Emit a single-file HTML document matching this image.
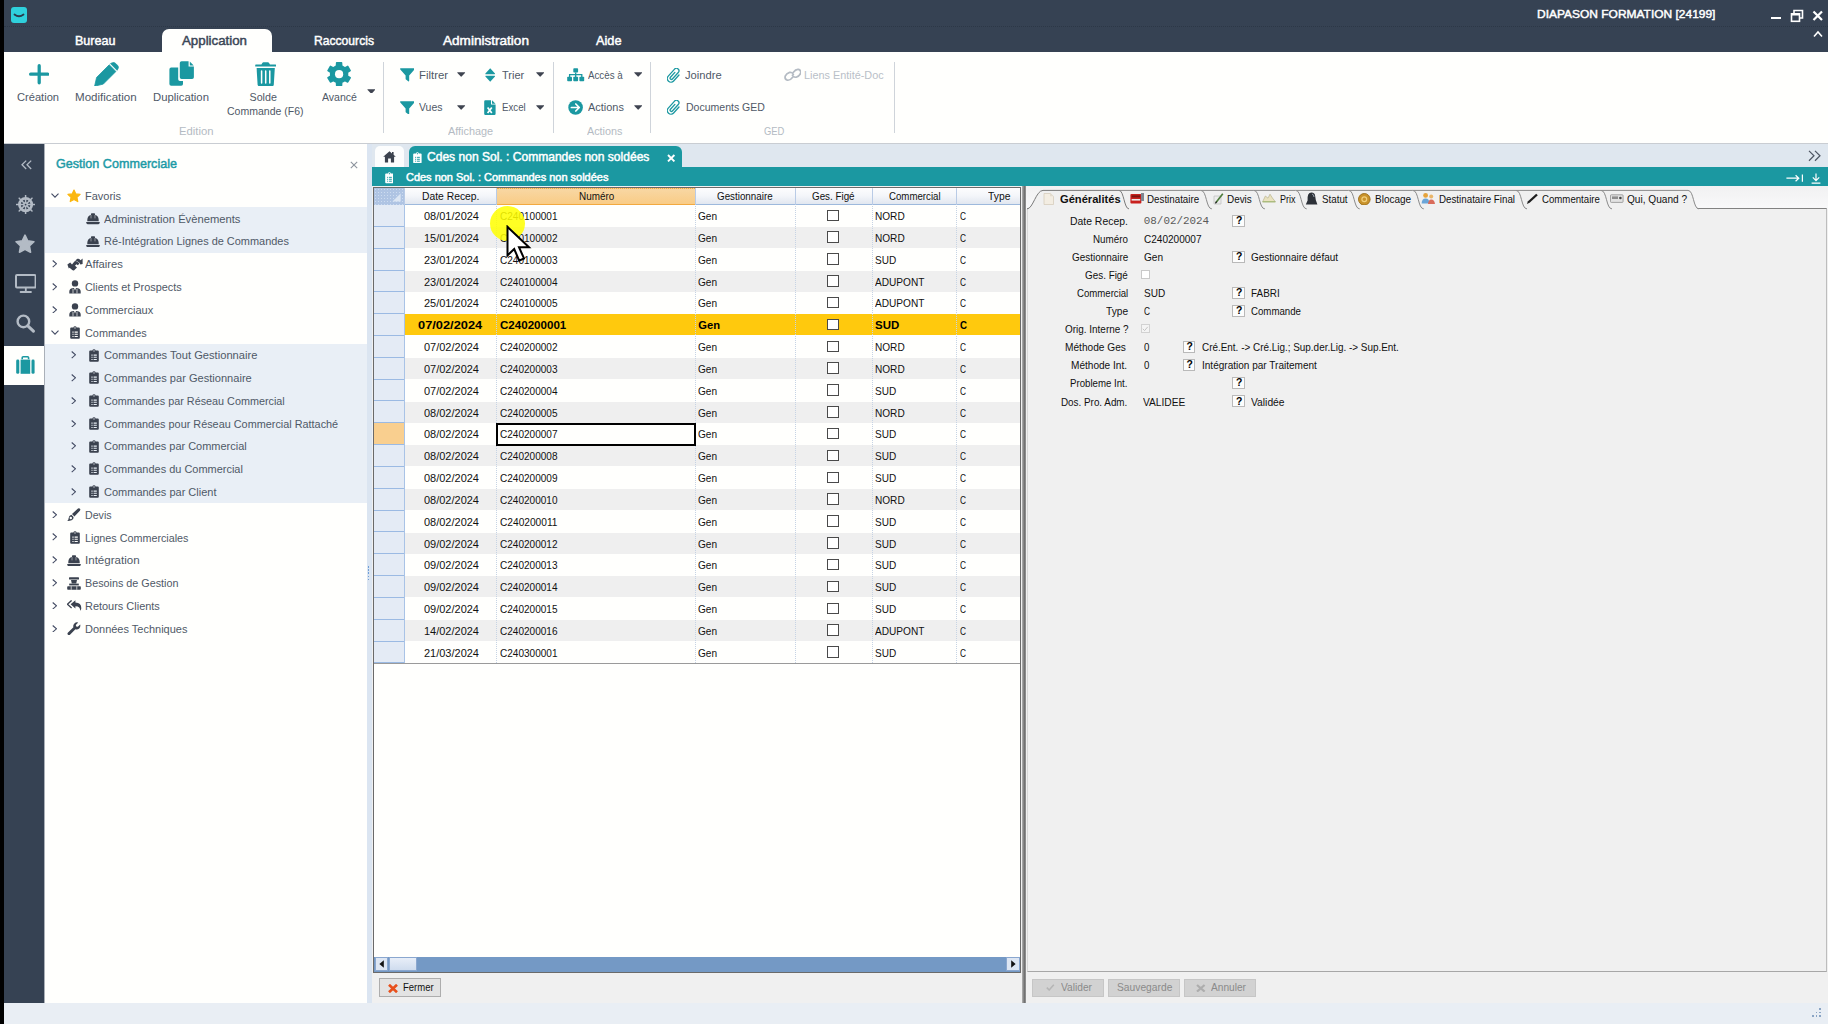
<!DOCTYPE html>
<html lang="fr"><head><meta charset="utf-8"><title>DIAPASON FORMATION [24199]</title>
<style>
html,body{margin:0;padding:0;}
body{width:1828px;height:1024px;overflow:hidden;position:relative;background:#fffffd;font-family:"Liberation Sans",sans-serif;}
.r{position:absolute;display:block;}
.t{position:absolute;white-space:nowrap;line-height:1;transform-origin:0 50%;}
</style></head><body>
<div class="r" style="left:0px;top:0px;width:4px;height:1024px;background:#000;"></div>
<div class="r" style="left:4px;top:0px;width:1824px;height:52px;background:#364253;"></div>
<div class="r" style="left:4px;top:26px;width:1824px;height:1px;background:transparent;border-top:1px dotted #2c3746;"></div>
<svg class="r" style="left:11px;top:7px;" width="17" height="17" viewBox="0 0 17 17"><rect x="0" y="0" width="16" height="16" rx="3" fill="#2fd0dc"/><path d="M3.5 7.5 Q8 11 12.5 7.5" stroke="#2b3a4c" stroke-width="1.8" fill="none" stroke-linecap="round"/></svg>
<span class="t" style="left:1536.50px;top:8.48px;font-size:11.6px;color:#fff;-webkit-text-stroke:0.45px #fff;transform:scaleX(1.0322);">DIAPASON FORMATION [24199]</span>
<div class="r" style="left:1771px;top:16.6px;width:10px;height:2.2px;background:#fff;"></div>
<svg class="r" style="left:1790px;top:9px;" width="14" height="14" viewBox="0 0 14 14"><path d="M4 4V1.5H12.5V9H10" fill="none" stroke="#fff" stroke-width="1.6"/><rect x="1.5" y="4.8" width="8" height="7.5" fill="none" stroke="#fff" stroke-width="1.6"/><rect x="1.5" y="4.5" width="8" height="2" fill="#fff"/></svg>
<svg class="r" style="left:1812px;top:10px;" width="12" height="12" viewBox="0 0 12 12"><path d="M1.5 1.5L10 10M10 1.5L1.5 10" stroke="#fff" stroke-width="2.2" fill="none"/></svg>
<svg class="r" style="left:1813px;top:30px;" width="10" height="8" viewBox="0 0 10 8"><path d="M1 6.5L5 2L9 6.5" stroke="#fff" stroke-width="1.6" fill="none"/></svg>
<div class="r" style="left:161.5px;top:29px;width:110px;height:23px;background:#fffffd;border-radius:7px 7px 0 0;"></div>
<span class="t" style="left:75.00px;top:35.10px;font-size:12.4px;color:#fff;-webkit-text-stroke:0.45px #fff;transform:scaleX(1.0131);">Bureau</span>
<span class="t" style="left:182.00px;top:35.10px;font-size:12.4px;color:#3a4656;-webkit-text-stroke:0.45px #3a4656;transform:scaleX(1.0718);">Application</span>
<span class="t" style="left:314.00px;top:35.10px;font-size:12.4px;color:#fff;-webkit-text-stroke:0.45px #fff;transform:scaleX(0.9785);">Raccourcis</span>
<span class="t" style="left:442.50px;top:35.10px;font-size:12.4px;color:#fff;-webkit-text-stroke:0.45px #fff;transform:scaleX(1.0948);">Administration</span>
<span class="t" style="left:596.00px;top:35.10px;font-size:12.4px;color:#fff;-webkit-text-stroke:0.45px #fff;transform:scaleX(1.0277);">Aide</span>
<div class="r" style="left:4px;top:52px;width:1824px;height:91px;background:#fffffd;"></div>
<div class="r" style="left:4px;top:143px;width:1824px;height:1px;background:#c9cdd2;"></div>
<div class="r" style="left:4px;top:144px;width:1824px;height:859px;background:#dfe7f1;"></div>
<div class="r" style="left:4px;top:1003px;width:1824px;height:21px;background:#e9eef4;"></div>
<div class="r" style="left:4px;top:144px;width:40px;height:859px;background:#364253;"></div>
<div class="r" style="left:44px;top:144px;width:322.5px;height:859px;background:#fffffd;"></div>
<div class="r" style="left:366.5px;top:144px;width:6.5px;height:859px;background:#dbe5f1;"></div>
<div class="r" style="left:44px;top:144px;width:0.9px;height:859px;background:#aab0b8;"></div>
<svg class="r" style="left:28.5px;top:64.3px;" width="20.4" height="20.4" viewBox="0 0 20 20"><path d="M10 1.6V18.4M1.6 10H18.4" stroke="#1b98a1" stroke-width="3.2" stroke-linecap="round" fill="none"/></svg>
<span class="t" style="left:17.10px;top:92.14px;font-size:10.7px;color:#4f5967;transform:scaleX(1.0411);">Création</span>
<svg class="r" style="left:94.2px;top:61.6px;" width="25" height="24.6" viewBox="0 0 25 24.6"><path d="M0.6 24.2L2.6 15.4L15.2 2.8L21.9 9.5L9.3 22.1Z" fill="#1b98a1" stroke="#1b98a1" stroke-width="0.8" stroke-linejoin="round"/><path d="M16.5 1.6L18 0.9Q20 -0.1 21.6 1.4L23.5 3.3Q25 5 24 6.8L23.1 8.3Z" fill="#1b98a1" stroke="#1b98a1" stroke-width="0.8" stroke-linejoin="round"/></svg>
<span class="t" style="left:75.10px;top:92.14px;font-size:10.7px;color:#4f5967;transform:scaleX(1.0824);">Modification</span>
<svg class="r" style="left:169.2px;top:61.3px;" width="25.2" height="25" viewBox="0 0 25.2 25"><path d="M2.2 6.6H9.2V18.2Q9.2 20 11 20H14V23Q14 24.8 12.2 24.8H2.2Q0.4 24.8 0.4 23V8.4Q0.4 6.6 2.2 6.6Z" fill="#1b98a1"/><path d="M12.6 0.3H19.6V5.5H24.9V16.2Q24.9 18 23.1 18H12.6Q10.8 18 10.8 16.2V2.1Q10.8 0.3 12.6 0.3Z" fill="#1b98a1"/><path d="M20.8 0.5L24.7 4.4H20.8Z" fill="#1b98a1"/></svg>
<span class="t" style="left:153.10px;top:92.14px;font-size:10.7px;color:#4f5967;transform:scaleX(1.0579);">Duplication</span>
<svg class="r" style="left:255px;top:61.6px;" width="21.4" height="24.6" viewBox="0 0 21.4 24.6"><path d="M0.8 2.6Q0.2 2.6 0.2 3.4V4.6H21.2V3.4Q21.2 2.6 20.6 2.6H15L13.9 0.8Q13.6 0.3 13 0.3H8.4Q7.8 0.3 7.5 0.8L6.4 2.6Z" fill="#1b98a1"/><path d="M1.6 5.9H19.8L18.8 22.4Q18.6 24.4 16.6 24.4H4.8Q2.8 24.4 2.6 22.4Z" fill="#1b98a1"/><path d="M6.6 9V21M10.7 9V21M14.8 9V21" stroke="#fff" stroke-width="1.5" stroke-linecap="round"/></svg>
<span class="t" style="left:249.50px;top:92.14px;font-size:10.7px;color:#4f5967;">Solde</span>
<span class="t" style="left:226.60px;top:106.14px;font-size:10.7px;color:#4f5967;transform:scaleX(0.9835);">Commande (F6)</span>
<svg class="r" style="left:327.2px;top:61.8px;" width="24.2" height="24.4" viewBox="0 0 24.2 24.4"><path d="M9.53 3.99L9.69 0.85L14.51 0.85L14.67 3.99L17.92 5.87L20.72 4.44L23.13 8.62L20.49 10.32L20.49 14.08L23.13 15.78L20.72 19.96L17.92 18.53L14.67 20.41L14.51 23.55L9.69 23.55L9.53 20.41L6.28 18.53L3.48 19.96L1.07 15.78L3.71 14.08L3.71 10.32L1.07 8.62L3.48 4.44L6.28 5.87Z" fill="#1b98a1" stroke="#1b98a1" stroke-width="1.6" stroke-linejoin="round"/><circle cx="12.1" cy="12.2" r="4.1" fill="#fffffd"/></svg>
<span class="t" style="left:321.80px;top:92.14px;font-size:10.7px;color:#4f5967;transform:scaleX(0.9860);">Avancé</span>
<svg class="r" style="left:366.6px;top:88.5px;" width="8.8" height="4.8" viewBox="0 0 10 6"><path d="M0.3 0.4H9.7Q10.2 0.6 9.7 1.2L5.5 5.6Q5 6 4.5 5.6L0.3 1.2Q-0.2 0.6 0.3 0.4Z" fill="#3f4450"/></svg>
<span class="t" style="left:178.50px;top:126.04px;font-size:10.7px;color:#b4bbc3;transform:scaleX(1.0546);">Edition</span>
<div class="r" style="left:383.4px;top:61.5px;width:1px;height:71px;background:#cfd4da;"></div>
<div class="r" style="left:552.5px;top:61.5px;width:1px;height:71px;background:#cfd4da;"></div>
<div class="r" style="left:650.3px;top:61.5px;width:1px;height:71px;background:#cfd4da;"></div>
<div class="r" style="left:893.6px;top:61.5px;width:1px;height:71px;background:#cfd4da;"></div>
<svg class="r" style="left:399.6px;top:68px;" width="14.8" height="13.7" viewBox="0 0 14.8 13.7"><path d="M0.6 0.3H14.2Q15.1 0.5 14.5 1.5L9.2 7.4V12.6Q9.2 13.8 8.2 13.2L6 11.6Q5.6 11.3 5.6 10.8V7.4L0.3 1.5Q-0.3 0.5 0.6 0.3Z" fill="#1b98a1"/></svg>
<svg class="r" style="left:399.6px;top:100.6px;" width="14.8" height="13.7" viewBox="0 0 14.8 13.7"><path d="M0.6 0.3H14.2Q15.1 0.5 14.5 1.5L9.2 7.4V12.6Q9.2 13.8 8.2 13.2L6 11.6Q5.6 11.3 5.6 10.8V7.4L0.3 1.5Q-0.3 0.5 0.6 0.3Z" fill="#1b98a1"/></svg>
<span class="t" style="left:418.80px;top:70.04px;font-size:10.7px;color:#4f5967;transform:scaleX(1.0644);">Filtrer</span>
<span class="t" style="left:418.80px;top:102.04px;font-size:10.7px;color:#4f5967;transform:scaleX(0.9838);">Vues</span>
<svg class="r" style="left:457.2px;top:72.4px;" width="8.4" height="4.8" viewBox="0 0 10 6"><path d="M0.3 0.4H9.7Q10.2 0.6 9.7 1.2L5.5 5.6Q5 6 4.5 5.6L0.3 1.2Q-0.2 0.6 0.3 0.4Z" fill="#3f4450"/></svg>
<svg class="r" style="left:457.2px;top:105px;" width="8.4" height="4.8" viewBox="0 0 10 6"><path d="M0.3 0.4H9.7Q10.2 0.6 9.7 1.2L5.5 5.6Q5 6 4.5 5.6L0.3 1.2Q-0.2 0.6 0.3 0.4Z" fill="#3f4450"/></svg>
<svg class="r" style="left:484.5px;top:68px;" width="10.4" height="14" viewBox="0 0 10.4 14"><path d="M5.2 0.3L10 5.6Q10.3 6.2 9.6 6.2H0.8Q0.1 6.2 0.4 5.6Z M5.2 13.7L10 8.4Q10.3 7.8 9.6 7.8H0.8Q0.1 7.8 0.4 8.4Z" fill="#1b98a1"/></svg>
<span class="t" style="left:501.50px;top:70.04px;font-size:10.7px;color:#4f5967;transform:scaleX(1.0283);">Trier</span>
<svg class="r" style="left:535.9px;top:72.4px;" width="8.4" height="4.8" viewBox="0 0 10 6"><path d="M0.3 0.4H9.7Q10.2 0.6 9.7 1.2L5.5 5.6Q5 6 4.5 5.6L0.3 1.2Q-0.2 0.6 0.3 0.4Z" fill="#3f4450"/></svg>
<svg class="r" style="left:535.9px;top:105px;" width="8.4" height="4.8" viewBox="0 0 10 6"><path d="M0.3 0.4H9.7Q10.2 0.6 9.7 1.2L5.5 5.6Q5 6 4.5 5.6L0.3 1.2Q-0.2 0.6 0.3 0.4Z" fill="#3f4450"/></svg>
<svg class="r" style="left:483.8px;top:99.8px;" width="11.8" height="15.2" viewBox="0 0 11.8 15.2"><path d="M1.4 0.2H7V4.6H11.6V13.8Q11.6 15 10.4 15H1.4Q0.2 15 0.2 13.8V1.4Q0.2 0.2 1.4 0.2Z" fill="#1b98a1"/><path d="M8 0.3L11.5 3.8H8Z" fill="#1b98a1"/><path d="M3.6 7.6L7.8 13M7.8 7.6L3.6 13" stroke="#fff" stroke-width="1.7"/></svg>
<span class="t" style="left:501.50px;top:102.04px;font-size:10.7px;color:#4f5967;transform:scaleX(0.9057);">Excel</span>
<span class="t" style="left:447.60px;top:126.04px;font-size:10.7px;color:#b4bbc3;transform:scaleX(1.0154);">Affichage</span>
<svg class="r" style="left:567.3px;top:68.3px;" width="17.4" height="13.4" viewBox="0 0 17.4 13.4"><rect x="6.3" y="0.2" width="4.8" height="4.4" rx="0.8" fill="#1b98a1"/><rect x="0.2" y="8.8" width="4.8" height="4.4" rx="0.8" fill="#1b98a1"/><rect x="6.3" y="8.8" width="4.8" height="4.4" rx="0.8" fill="#1b98a1"/><rect x="12.4" y="8.8" width="4.8" height="4.4" rx="0.8" fill="#1b98a1"/><path d="M8.7 4.4V9M2.6 9V6.7H14.8V9" stroke="#1b98a1" stroke-width="1.3" fill="none"/></svg>
<span class="t" style="left:587.90px;top:70.04px;font-size:10.7px;color:#4f5967;transform:scaleX(0.9117);">Accès à</span>
<svg class="r" style="left:633.7px;top:72.4px;" width="8.4" height="4.8" viewBox="0 0 10 6"><path d="M0.3 0.4H9.7Q10.2 0.6 9.7 1.2L5.5 5.6Q5 6 4.5 5.6L0.3 1.2Q-0.2 0.6 0.3 0.4Z" fill="#3f4450"/></svg>
<svg class="r" style="left:633.7px;top:105px;" width="8.4" height="4.8" viewBox="0 0 10 6"><path d="M0.3 0.4H9.7Q10.2 0.6 9.7 1.2L5.5 5.6Q5 6 4.5 5.6L0.3 1.2Q-0.2 0.6 0.3 0.4Z" fill="#3f4450"/></svg>
<svg class="r" style="left:568.4px;top:100.1px;" width="15.2" height="15" viewBox="0 0 15.2 15"><circle cx="7.6" cy="7.5" r="7.3" fill="#1b98a1"/><path d="M3.4 7.5H11M7.8 4L11.3 7.5L7.8 11" stroke="#fff" stroke-width="1.7" fill="none" stroke-linecap="round" stroke-linejoin="round"/></svg>
<span class="t" style="left:587.90px;top:102.04px;font-size:10.7px;color:#4f5967;transform:scaleX(1.0231);">Actions</span>
<span class="t" style="left:586.50px;top:126.04px;font-size:10.7px;color:#b4bbc3;transform:scaleX(1.0088);">Actions</span>
<svg class="r" style="left:667px;top:67.6px;" width="13.4" height="15" viewBox="0 0 13.4 15"><g transform="rotate(42 6.7 7.5)"><path d="M10.3 3.6V11.6A3.6 3.6 0 0 1 3.1 11.6V2.2A2.5 2.5 0 0 1 8.1 2.2V11A1.3 1.3 0 0 1 5.5 11V4.4" fill="none" stroke="#1b98a1" stroke-width="1.3" stroke-linecap="round"/></g></svg>
<svg class="r" style="left:667px;top:100px;" width="13.4" height="15" viewBox="0 0 13.4 15"><g transform="rotate(42 6.7 7.5)"><path d="M10.3 3.6V11.6A3.6 3.6 0 0 1 3.1 11.6V2.2A2.5 2.5 0 0 1 8.1 2.2V11A1.3 1.3 0 0 1 5.5 11V4.4" fill="none" stroke="#1b98a1" stroke-width="1.3" stroke-linecap="round"/></g></svg>
<span class="t" style="left:685.20px;top:70.04px;font-size:10.7px;color:#4f5967;transform:scaleX(1.0459);">Joindre</span>
<span class="t" style="left:685.90px;top:102.04px;font-size:10.7px;color:#4f5967;transform:scaleX(0.9842);">Documents GED</span>
<svg class="r" style="left:783.7px;top:68px;" width="17.8" height="13.6" viewBox="0 0 17.8 13.6"><g fill="none" stroke="#b4bbc3" stroke-width="1.7" stroke-linecap="round"><path d="M8.4 9.4Q6 12.6 3.4 12.2Q0.4 11.4 1.2 8.2Q2.4 5.4 5.6 4.4Q8.6 4 9.4 6.4"/><path d="M9.4 4.2Q11.8 1 14.4 1.4Q17.4 2.2 16.6 5.4Q15.4 8.2 12.2 9.2Q9.2 9.6 8.4 7.2"/></g></svg>
<span class="t" style="left:804.40px;top:70.04px;font-size:10.7px;color:#b9c0c8;transform:scaleX(1.0153);">Liens Entité-Doc</span>
<span class="t" style="left:763.70px;top:126.04px;font-size:10.7px;color:#b4bbc3;transform:scaleX(0.8799);">GED</span>
<svg class="r" style="left:20.5px;top:160px;" width="11" height="9.6" viewBox="0 0 11 9.6"><path d="M5.2 0.6L1 4.8L5.2 9M10.2 0.6L6 4.8L10.2 9" fill="none" stroke="#b3bbc5" stroke-width="1.3"/></svg>
<svg class="r" style="left:15.9px;top:194.7px;" width="19.2" height="19.2" viewBox="0 0 19.2 19.2"><circle cx="9.6" cy="9.6" r="6.2" fill="none" stroke="#b3bbc5" stroke-width="2.7"/><path d="M11.10 9.60L18.70 9.60" stroke="#b3bbc5" stroke-width="1.5" stroke-linecap="round"/><path d="M10.66 10.66L16.03 16.03" stroke="#b3bbc5" stroke-width="1.5" stroke-linecap="round"/><path d="M9.60 11.10L9.60 18.70" stroke="#b3bbc5" stroke-width="1.5" stroke-linecap="round"/><path d="M8.54 10.66L3.17 16.03" stroke="#b3bbc5" stroke-width="1.5" stroke-linecap="round"/><path d="M8.10 9.60L0.50 9.60" stroke="#b3bbc5" stroke-width="1.5" stroke-linecap="round"/><path d="M8.54 8.54L3.17 3.17" stroke="#b3bbc5" stroke-width="1.5" stroke-linecap="round"/><path d="M9.60 8.10L9.60 0.50" stroke="#b3bbc5" stroke-width="1.5" stroke-linecap="round"/><path d="M10.66 8.54L16.03 3.17" stroke="#b3bbc5" stroke-width="1.5" stroke-linecap="round"/><circle cx="9.6" cy="9.6" r="2.5" fill="#b3bbc5"/><circle cx="9.6" cy="9.6" r="0.9" fill="#364253"/></svg>
<svg class="r" style="left:15px;top:233.6px;" width="20" height="20" viewBox="0 0 20 20"><path d="M10.00 1.20L12.70 6.88L18.94 7.70L14.37 12.02L15.53 18.20L10.00 15.20L4.47 18.20L5.63 12.02L1.06 7.70L7.30 6.88Z" fill="#b3bbc5" stroke="#b3bbc5" stroke-width="1.6" stroke-linejoin="round"/></svg>
<svg class="r" style="left:14.6px;top:274.3px;" width="21.6" height="19" viewBox="0 0 21.6 19"><rect x="1" y="1" width="19.6" height="12.6" rx="1" fill="none" stroke="#b3bbc5" stroke-width="2"/><path d="M10.8 14V17.6M5.6 18H16" stroke="#b3bbc5" stroke-width="1.8" fill="none" stroke-linecap="round"/></svg>
<svg class="r" style="left:15.8px;top:314.4px;" width="19" height="18.6" viewBox="0 0 19 18.6"><circle cx="7.4" cy="7.4" r="5.8" fill="none" stroke="#b3bbc5" stroke-width="2.4"/><path d="M11.8 11.8L17.4 17.2" stroke="#b3bbc5" stroke-width="3" stroke-linecap="round"/></svg>
<div class="r" style="left:4px;top:345.5px;width:40px;height:39.7px;background:#fffffd;"></div>
<svg class="r" style="left:15.9px;top:356px;" width="18.8" height="18" viewBox="0 0 18.8 18"><path d="M6.2 3.2V1.8Q6.2 0.8 7.2 0.8H11.6Q12.6 0.8 12.6 1.8V3.2" fill="none" stroke="#1b98a1" stroke-width="1.6"/><rect x="0.2" y="3.6" width="3.1" height="14.2" rx="1.4" fill="#1b98a1"/><rect x="4.6" y="3.6" width="9.6" height="14.2" fill="#1b98a1"/><rect x="15.5" y="3.6" width="3.1" height="14.2" rx="1.4" fill="#1b98a1"/></svg>
<span class="t" style="left:56.20px;top:157.96px;font-size:12.8px;color:#1c9aa6;-webkit-text-stroke:0.45px #1c9aa6;transform:scaleX(0.9835);">Gestion Commerciale</span>
<svg class="r" style="left:350px;top:161px;" width="8" height="8" viewBox="0 0 8 8"><path d="M0.8 0.8L7.2 7.2M7.2 0.8L0.8 7.2" stroke="#8d949d" stroke-width="1.1"/></svg>
<div class="r" style="left:44.5px;top:207.325px;width:322px;height:45.55px;background:#e9eff6;"></div>
<div class="r" style="left:44.5px;top:343.975px;width:322px;height:159.425px;background:#e9eff6;"></div>
<svg class="r" style="left:50.6px;top:193.038px;" width="8" height="5" viewBox="0 0 8 5"><path d="M0.5 0.6L4 4.2L7.5 0.6" fill="none" stroke="#434b63" stroke-width="1.1"/></svg>
<svg class="r" style="left:67.3px;top:188.638px;" width="14" height="14" viewBox="0 0 14 14"><path d="M7.00 1.00L8.82 4.89L13.09 5.42L9.95 8.36L10.76 12.58L7.00 10.50L3.24 12.58L4.05 8.36L0.91 5.42L5.18 4.89Z" fill="#fbb70e" stroke="#fbb70e" stroke-width="1.2" stroke-linejoin="round"/></svg>
<span class="t" style="left:85.20px;top:190.88px;font-size:10.7px;color:#4f5967;transform:scaleX(1.0291);">Favoris</span>
<svg class="r" style="left:86.4px;top:213.213px;" width="14" height="11.4" viewBox="0 0 14 11.4"><path d="M1.3 8.2V6.8Q1.5 2.8 5 1.7V0.9Q5 0.2 5.7 0.2H8.3Q9 0.2 9 0.9V1.7Q12.5 2.8 12.7 6.8V8.2Z" fill="#3b424f"/><path d="M5 2V5.4M9 2V5.4" stroke="#fffffd" stroke-width="0.6" opacity="0.75"/><path d="M0.7 8.9H13.3Q13.9 8.9 13.8 9.6Q13.5 11.2 12.4 11.2H1.6Q0.5 11.2 0.2 9.6Q0.1 8.9 0.7 8.9Z" fill="#3b424f"/></svg>
<span class="t" style="left:104.40px;top:213.65px;font-size:10.7px;color:#4f5967;transform:scaleX(1.0488);">Administration Évènements</span>
<svg class="r" style="left:86.4px;top:235.988px;" width="14" height="11.4" viewBox="0 0 14 11.4"><path d="M1.3 8.2V6.8Q1.5 2.8 5 1.7V0.9Q5 0.2 5.7 0.2H8.3Q9 0.2 9 0.9V1.7Q12.5 2.8 12.7 6.8V8.2Z" fill="#3b424f"/><path d="M5 2V5.4M9 2V5.4" stroke="#fffffd" stroke-width="0.6" opacity="0.75"/><path d="M0.7 8.9H13.3Q13.9 8.9 13.8 9.6Q13.5 11.2 12.4 11.2H1.6Q0.5 11.2 0.2 9.6Q0.1 8.9 0.7 8.9Z" fill="#3b424f"/></svg>
<span class="t" style="left:104.40px;top:236.43px;font-size:10.7px;color:#4f5967;transform:scaleX(1.0238);">Ré-Intégration Lignes de Commandes</span>
<svg class="r" style="left:51.7px;top:260.162px;" width="5.4" height="7.6" viewBox="0 0 5.4 7.6"><path d="M0.7 0.5L4.5 3.8L0.7 7.1" fill="none" stroke="#434b63" stroke-width="1.1"/></svg>
<svg class="r" style="left:67.2px;top:257.562px;" width="16" height="13" viewBox="0 0 16 13"><path d="M0.4 6.6L3.2 4.6L5 6.4L7.4 3.4Q8.4 2.6 9.6 3.2L12.4 5.2L11 7.2L9.4 6.2L8 7.8L10 9.4L7.2 12.2Q6.2 12.8 5.2 12L2.6 9.8L1.8 10.4Z" fill="#3b424f"/><path d="M8.2 2.4L10.4 0.8Q11.4 0.4 12.2 1L13.6 2.2L15.6 0.6V6L13.4 6.4L12.6 5L9.8 3Q9 2.4 8.2 2.4Z" fill="#3b424f"/></svg>
<span class="t" style="left:85.20px;top:259.20px;font-size:10.7px;color:#4f5967;transform:scaleX(1.0532);">Affaires</span>
<svg class="r" style="left:51.7px;top:282.938px;" width="5.4" height="7.6" viewBox="0 0 5.4 7.6"><path d="M0.7 0.5L4.5 3.8L0.7 7.1" fill="none" stroke="#434b63" stroke-width="1.1"/></svg>
<svg class="r" style="left:69px;top:280.338px;" width="12" height="13.6" viewBox="0 0 12 13.6"><circle cx="6" cy="3.4" r="3.2" fill="#3b424f"/><path d="M0.3 13.4V11.6Q0.4 8.6 3.4 8.2L5 8L6 10.6L7 8L8.6 8.2Q11.6 8.6 11.7 11.6V13.4Z" fill="#3b424f"/><path d="M5.4 8.4H6.6L7 12.8H5Z" fill="#fffffd" opacity="0.0"/><path d="M4 9V13.4M8 9V13.4" stroke="#fffffd" stroke-width="0.7"/></svg>
<span class="t" style="left:85.20px;top:281.98px;font-size:10.7px;color:#4f5967;transform:scaleX(1.0174);">Clients et Prospects</span>
<svg class="r" style="left:51.7px;top:305.712px;" width="5.4" height="7.6" viewBox="0 0 5.4 7.6"><path d="M0.7 0.5L4.5 3.8L0.7 7.1" fill="none" stroke="#434b63" stroke-width="1.1"/></svg>
<svg class="r" style="left:69px;top:303.113px;" width="12" height="13.6" viewBox="0 0 12 13.6"><circle cx="6" cy="3.4" r="3.2" fill="#3b424f"/><path d="M0.3 13.4V11.6Q0.4 8.6 3.4 8.2L5 8L6 10.6L7 8L8.6 8.2Q11.6 8.6 11.7 11.6V13.4Z" fill="#3b424f"/><path d="M5.4 8.4H6.6L7 12.8H5Z" fill="#fffffd" opacity="0.0"/><path d="M4 9V13.4M8 9V13.4" stroke="#fffffd" stroke-width="0.7"/></svg>
<span class="t" style="left:85.20px;top:304.75px;font-size:10.7px;color:#4f5967;transform:scaleX(1.0349);">Commerciaux</span>
<svg class="r" style="left:50.6px;top:329.687px;" width="8" height="5" viewBox="0 0 8 5"><path d="M0.5 0.6L4 4.2L7.5 0.6" fill="none" stroke="#434b63" stroke-width="1.1"/></svg>
<svg class="r" style="left:69.7px;top:326.188px;" width="10" height="13" viewBox="0 0 10 13"><path d="M1.2 1.6H3.4Q3.6 0.2 5 0.2Q6.4 0.2 6.6 1.6H8.8Q9.8 1.6 9.8 2.6V11.8Q9.8 12.8 8.8 12.8H1.2Q0.2 12.8 0.2 11.8V2.6Q0.2 1.6 1.2 1.6Z" fill="#3b424f"/><path d="M2.4 6.1H3.6M4.6 6.1H7.8M2.4 8.3H3.6M4.6 8.3H7.8M2.4 10.5H3.6M4.6 10.5H7.8" stroke="#fffffd" stroke-width="1.1"/><circle cx="5" cy="1.9" r="0.7" fill="#fffffd"/></svg>
<span class="t" style="left:85.20px;top:327.53px;font-size:10.7px;color:#4f5967;transform:scaleX(1.0173);">Commandes</span>
<svg class="r" style="left:70.9px;top:351.262px;" width="5.4" height="7.6" viewBox="0 0 5.4 7.6"><path d="M0.7 0.5L4.5 3.8L0.7 7.1" fill="none" stroke="#434b63" stroke-width="1.1"/></svg>
<svg class="r" style="left:88.5px;top:348.562px;" width="10" height="13" viewBox="0 0 10 13"><path d="M1.2 1.6H3.4Q3.6 0.2 5 0.2Q6.4 0.2 6.6 1.6H8.8Q9.8 1.6 9.8 2.6V11.8Q9.8 12.8 8.8 12.8H1.2Q0.2 12.8 0.2 11.8V2.6Q0.2 1.6 1.2 1.6Z" fill="#3b424f"/><path d="M2.4 6.1H3.6M4.6 6.1H7.8M2.4 8.3H3.6M4.6 8.3H7.8M2.4 10.5H3.6M4.6 10.5H7.8" stroke="#e9eff6" stroke-width="1.1"/><circle cx="5" cy="1.9" r="0.7" fill="#e9eff6"/></svg>
<span class="t" style="left:104.40px;top:350.30px;font-size:10.7px;color:#4f5967;transform:scaleX(1.0422);">Commandes Tout Gestionnaire</span>
<svg class="r" style="left:70.9px;top:374.037px;" width="5.4" height="7.6" viewBox="0 0 5.4 7.6"><path d="M0.7 0.5L4.5 3.8L0.7 7.1" fill="none" stroke="#434b63" stroke-width="1.1"/></svg>
<svg class="r" style="left:88.5px;top:371.337px;" width="10" height="13" viewBox="0 0 10 13"><path d="M1.2 1.6H3.4Q3.6 0.2 5 0.2Q6.4 0.2 6.6 1.6H8.8Q9.8 1.6 9.8 2.6V11.8Q9.8 12.8 8.8 12.8H1.2Q0.2 12.8 0.2 11.8V2.6Q0.2 1.6 1.2 1.6Z" fill="#3b424f"/><path d="M2.4 6.1H3.6M4.6 6.1H7.8M2.4 8.3H3.6M4.6 8.3H7.8M2.4 10.5H3.6M4.6 10.5H7.8" stroke="#e9eff6" stroke-width="1.1"/><circle cx="5" cy="1.9" r="0.7" fill="#e9eff6"/></svg>
<span class="t" style="left:104.40px;top:373.08px;font-size:10.7px;color:#4f5967;transform:scaleX(1.0363);">Commandes par Gestionnaire</span>
<svg class="r" style="left:70.9px;top:396.812px;" width="5.4" height="7.6" viewBox="0 0 5.4 7.6"><path d="M0.7 0.5L4.5 3.8L0.7 7.1" fill="none" stroke="#434b63" stroke-width="1.1"/></svg>
<svg class="r" style="left:88.5px;top:394.113px;" width="10" height="13" viewBox="0 0 10 13"><path d="M1.2 1.6H3.4Q3.6 0.2 5 0.2Q6.4 0.2 6.6 1.6H8.8Q9.8 1.6 9.8 2.6V11.8Q9.8 12.8 8.8 12.8H1.2Q0.2 12.8 0.2 11.8V2.6Q0.2 1.6 1.2 1.6Z" fill="#3b424f"/><path d="M2.4 6.1H3.6M4.6 6.1H7.8M2.4 8.3H3.6M4.6 8.3H7.8M2.4 10.5H3.6M4.6 10.5H7.8" stroke="#e9eff6" stroke-width="1.1"/><circle cx="5" cy="1.9" r="0.7" fill="#e9eff6"/></svg>
<span class="t" style="left:104.40px;top:395.85px;font-size:10.7px;color:#4f5967;transform:scaleX(1.0107);">Commandes par Réseau Commercial</span>
<svg class="r" style="left:70.9px;top:419.587px;" width="5.4" height="7.6" viewBox="0 0 5.4 7.6"><path d="M0.7 0.5L4.5 3.8L0.7 7.1" fill="none" stroke="#434b63" stroke-width="1.1"/></svg>
<svg class="r" style="left:88.5px;top:416.887px;" width="10" height="13" viewBox="0 0 10 13"><path d="M1.2 1.6H3.4Q3.6 0.2 5 0.2Q6.4 0.2 6.6 1.6H8.8Q9.8 1.6 9.8 2.6V11.8Q9.8 12.8 8.8 12.8H1.2Q0.2 12.8 0.2 11.8V2.6Q0.2 1.6 1.2 1.6Z" fill="#3b424f"/><path d="M2.4 6.1H3.6M4.6 6.1H7.8M2.4 8.3H3.6M4.6 8.3H7.8M2.4 10.5H3.6M4.6 10.5H7.8" stroke="#e9eff6" stroke-width="1.1"/><circle cx="5" cy="1.9" r="0.7" fill="#e9eff6"/></svg>
<span class="t" style="left:104.40px;top:418.63px;font-size:10.7px;color:#4f5967;transform:scaleX(1.0159);">Commandes pour Réseau Commercial Rattaché</span>
<svg class="r" style="left:70.9px;top:442.362px;" width="5.4" height="7.6" viewBox="0 0 5.4 7.6"><path d="M0.7 0.5L4.5 3.8L0.7 7.1" fill="none" stroke="#434b63" stroke-width="1.1"/></svg>
<svg class="r" style="left:88.5px;top:439.662px;" width="10" height="13" viewBox="0 0 10 13"><path d="M1.2 1.6H3.4Q3.6 0.2 5 0.2Q6.4 0.2 6.6 1.6H8.8Q9.8 1.6 9.8 2.6V11.8Q9.8 12.8 8.8 12.8H1.2Q0.2 12.8 0.2 11.8V2.6Q0.2 1.6 1.2 1.6Z" fill="#3b424f"/><path d="M2.4 6.1H3.6M4.6 6.1H7.8M2.4 8.3H3.6M4.6 8.3H7.8M2.4 10.5H3.6M4.6 10.5H7.8" stroke="#e9eff6" stroke-width="1.1"/><circle cx="5" cy="1.9" r="0.7" fill="#e9eff6"/></svg>
<span class="t" style="left:104.40px;top:441.40px;font-size:10.7px;color:#4f5967;transform:scaleX(1.0271);">Commandes par Commercial</span>
<svg class="r" style="left:70.9px;top:465.137px;" width="5.4" height="7.6" viewBox="0 0 5.4 7.6"><path d="M0.7 0.5L4.5 3.8L0.7 7.1" fill="none" stroke="#434b63" stroke-width="1.1"/></svg>
<svg class="r" style="left:88.5px;top:462.438px;" width="10" height="13" viewBox="0 0 10 13"><path d="M1.2 1.6H3.4Q3.6 0.2 5 0.2Q6.4 0.2 6.6 1.6H8.8Q9.8 1.6 9.8 2.6V11.8Q9.8 12.8 8.8 12.8H1.2Q0.2 12.8 0.2 11.8V2.6Q0.2 1.6 1.2 1.6Z" fill="#3b424f"/><path d="M2.4 6.1H3.6M4.6 6.1H7.8M2.4 8.3H3.6M4.6 8.3H7.8M2.4 10.5H3.6M4.6 10.5H7.8" stroke="#e9eff6" stroke-width="1.1"/><circle cx="5" cy="1.9" r="0.7" fill="#e9eff6"/></svg>
<span class="t" style="left:104.40px;top:464.18px;font-size:10.7px;color:#4f5967;transform:scaleX(1.0253);">Commandes du Commercial</span>
<svg class="r" style="left:70.9px;top:487.912px;" width="5.4" height="7.6" viewBox="0 0 5.4 7.6"><path d="M0.7 0.5L4.5 3.8L0.7 7.1" fill="none" stroke="#434b63" stroke-width="1.1"/></svg>
<svg class="r" style="left:88.5px;top:485.212px;" width="10" height="13" viewBox="0 0 10 13"><path d="M1.2 1.6H3.4Q3.6 0.2 5 0.2Q6.4 0.2 6.6 1.6H8.8Q9.8 1.6 9.8 2.6V11.8Q9.8 12.8 8.8 12.8H1.2Q0.2 12.8 0.2 11.8V2.6Q0.2 1.6 1.2 1.6Z" fill="#3b424f"/><path d="M2.4 6.1H3.6M4.6 6.1H7.8M2.4 8.3H3.6M4.6 8.3H7.8M2.4 10.5H3.6M4.6 10.5H7.8" stroke="#e9eff6" stroke-width="1.1"/><circle cx="5" cy="1.9" r="0.7" fill="#e9eff6"/></svg>
<span class="t" style="left:104.40px;top:486.95px;font-size:10.7px;color:#4f5967;transform:scaleX(1.0291);">Commandes par Client</span>
<svg class="r" style="left:51.7px;top:510.687px;" width="5.4" height="7.6" viewBox="0 0 5.4 7.6"><path d="M0.7 0.5L4.5 3.8L0.7 7.1" fill="none" stroke="#434b63" stroke-width="1.1"/></svg>
<svg class="r" style="left:67.2px;top:508.087px;" width="13.6" height="13.2" viewBox="0 0 13.6 13.2"><path d="M11 0.5Q12.2 -0.2 13 0.7Q13.8 1.6 12.9 2.7L7.4 8.4L5 6Z" fill="#3b424f"/><path d="M4.4 6.8L6.6 9Q6.8 11.4 4.6 12.2Q2.4 13 0.3 12.9Q1.6 11.8 1.6 10.2Q1.8 7.4 4.4 6.8Z" fill="#3b424f"/><circle cx="3.8" cy="10" r="1.2" fill="#fffffd"/></svg>
<span class="t" style="left:85.20px;top:509.73px;font-size:10.7px;color:#4f5967;transform:scaleX(0.9941);">Devis</span>
<svg class="r" style="left:51.7px;top:533.462px;" width="5.4" height="7.6" viewBox="0 0 5.4 7.6"><path d="M0.7 0.5L4.5 3.8L0.7 7.1" fill="none" stroke="#434b63" stroke-width="1.1"/></svg>
<svg class="r" style="left:69.7px;top:531.162px;" width="10" height="13" viewBox="0 0 10 13"><path d="M1.2 1.6H3.4Q3.6 0.2 5 0.2Q6.4 0.2 6.6 1.6H8.8Q9.8 1.6 9.8 2.6V11.8Q9.8 12.8 8.8 12.8H1.2Q0.2 12.8 0.2 11.8V2.6Q0.2 1.6 1.2 1.6Z" fill="#3b424f"/><path d="M2.4 6.1H3.6M4.6 6.1H7.8M2.4 8.3H3.6M4.6 8.3H7.8M2.4 10.5H3.6M4.6 10.5H7.8" stroke="#fffffd" stroke-width="1.1"/><circle cx="5" cy="1.9" r="0.7" fill="#fffffd"/></svg>
<span class="t" style="left:85.20px;top:532.50px;font-size:10.7px;color:#4f5967;transform:scaleX(1.0070);">Lignes Commerciales</span>
<svg class="r" style="left:51.7px;top:556.237px;" width="5.4" height="7.6" viewBox="0 0 5.4 7.6"><path d="M0.7 0.5L4.5 3.8L0.7 7.1" fill="none" stroke="#434b63" stroke-width="1.1"/></svg>
<svg class="r" style="left:67.2px;top:554.837px;" width="14" height="11.4" viewBox="0 0 14 11.4"><path d="M1.3 8.2V6.8Q1.5 2.8 5 1.7V0.9Q5 0.2 5.7 0.2H8.3Q9 0.2 9 0.9V1.7Q12.5 2.8 12.7 6.8V8.2Z" fill="#3b424f"/><path d="M5 2V5.4M9 2V5.4" stroke="#fffffd" stroke-width="0.6" opacity="0.75"/><path d="M0.7 8.9H13.3Q13.9 8.9 13.8 9.6Q13.5 11.2 12.4 11.2H1.6Q0.5 11.2 0.2 9.6Q0.1 8.9 0.7 8.9Z" fill="#3b424f"/></svg>
<span class="t" style="left:85.20px;top:555.28px;font-size:10.7px;color:#4f5967;transform:scaleX(1.0800);">Intégration</span>
<svg class="r" style="left:51.7px;top:579.012px;" width="5.4" height="7.6" viewBox="0 0 5.4 7.6"><path d="M0.7 0.5L4.5 3.8L0.7 7.1" fill="none" stroke="#434b63" stroke-width="1.1"/></svg>
<svg class="r" style="left:67.2px;top:576.512px;" width="14" height="13" viewBox="0 0 14 13"><rect x="2" y="0.2" width="10" height="2.4" rx="0.6" fill="#3b424f"/><path d="M4 3H10L9.2 6.4H4.8Z" fill="#3b424f"/><rect x="2.2" y="6.6" width="9.6" height="1.8" fill="#3b424f"/><rect x="0.2" y="9.2" width="13.6" height="3.6" rx="0.8" fill="#3b424f"/><path d="M4.2 9.2V12.8M9.8 9.2V12.8" stroke="#fffffd" stroke-width="0.7"/></svg>
<span class="t" style="left:85.20px;top:578.05px;font-size:10.7px;color:#4f5967;transform:scaleX(1.0088);">Besoins de Gestion</span>
<svg class="r" style="left:51.7px;top:601.788px;" width="5.4" height="7.6" viewBox="0 0 5.4 7.6"><path d="M0.7 0.5L4.5 3.8L0.7 7.1" fill="none" stroke="#434b63" stroke-width="1.1"/></svg>
<svg class="r" style="left:67.2px;top:600.188px;" width="14.6" height="11" viewBox="0 0 14.6 11"><path d="M4.6 0.4L0.4 4.2L4.6 8" fill="none" stroke="#3b424f" stroke-width="1.3"/><path d="M8.4 0.2V2.4Q14.4 2.6 14.3 8.2Q14.2 9.8 13.2 10.8Q13.6 6.4 8.4 6.2V8.4L3.6 4.3Z" fill="#3b424f"/></svg>
<span class="t" style="left:85.20px;top:600.83px;font-size:10.7px;color:#4f5967;transform:scaleX(1.0241);">Retours Clients</span>
<svg class="r" style="left:51.7px;top:624.562px;" width="5.4" height="7.6" viewBox="0 0 5.4 7.6"><path d="M0.7 0.5L4.5 3.8L0.7 7.1" fill="none" stroke="#434b63" stroke-width="1.1"/></svg>
<svg class="r" style="left:67.2px;top:621.762px;" width="13.6" height="13.6" viewBox="0 0 13.6 13.6"><path d="M13.2 2.6Q13.8 4.8 12.2 6.4Q10.6 7.8 8.4 7.2L3 12.8Q2 13.6 1 12.8Q0 11.8 0.8 10.8L6.4 5.2Q5.8 3 7.4 1.4Q9 -0.1 11.2 0.5L8.8 2.9L9.2 4.4L10.8 4.8Z" fill="#3b424f"/></svg>
<span class="t" style="left:85.20px;top:623.60px;font-size:10.7px;color:#4f5967;transform:scaleX(1.0278);">Données Techniques</span>
<div class="r" style="left:367.6px;top:566px;width:1.2px;height:1.6px;background:#6f9fd8;"></div>
<div class="r" style="left:367.6px;top:569.2px;width:1.2px;height:1.6px;background:#6f9fd8;"></div>
<div class="r" style="left:367.6px;top:572.4px;width:1.2px;height:1.6px;background:#6f9fd8;"></div>
<div class="r" style="left:367.6px;top:575.6px;width:1.2px;height:1.6px;background:#6f9fd8;"></div>
<div class="r" style="left:367.6px;top:578.8px;width:1.2px;height:1.6px;background:#6f9fd8;"></div>
<div class="r" style="left:372px;top:144px;width:1456px;height:23px;background:#dfe7ef;"></div>
<div class="r" style="left:374.6px;top:146px;width:29.3px;height:21px;background:#fcfdfd;border-radius:5px 5px 0 0;"></div>
<svg class="r" style="left:383.2px;top:151px;" width="13" height="11.6" viewBox="0 0 13 11.6"><path d="M6.5 0.2L0.2 5.8H1.9V11.4H5.1V7.6H7.9V11.4H11.1V5.8H12.8L10.6 3.8V1H9V2.4Z" fill="#3b424e"/></svg>
<div class="r" style="left:408.5px;top:145.8px;width:273.8px;height:22px;background:#1b98a1;border-radius:6px 6px 0 0;"></div>
<div class="r" style="left:372px;top:167px;width:1456px;height:18.6px;background:#1b98a1;"></div>
<svg class="r" style="left:413.2px;top:152.1px;" width="8.8" height="11.4" viewBox="0 0 10 13"><path d="M1.2 1.6H3.4Q3.6 0.2 5 0.2Q6.4 0.2 6.6 1.6H8.8Q9.8 1.6 9.8 2.6V11.8Q9.8 12.8 8.8 12.8H1.2Q0.2 12.8 0.2 11.8V2.6Q0.2 1.6 1.2 1.6Z" fill="#fff"/><path d="M2.4 6.1H3.6M4.6 6.1H7.8M2.4 8.3H3.6M4.6 8.3H7.8M2.4 10.5H3.6M4.6 10.5H7.8" stroke="#1b98a1" stroke-width="1.1"/><circle cx="5" cy="1.9" r="0.7" fill="#1b98a1"/></svg>
<span class="t" style="left:426.70px;top:152.23px;font-size:11.9px;color:#fff;-webkit-text-stroke:0.45px #fff;transform:scaleX(1.0133);">Cdes non Sol. : Commandes non soldées</span>
<svg class="r" style="left:667.2px;top:154px;" width="8.4" height="8.4" viewBox="0 0 8.4 8.4"><path d="M1 1L7.4 7.4M7.4 1L1 7.4" stroke="#fff" stroke-width="1.9"/></svg>
<svg class="r" style="left:384.6px;top:172.2px;" width="8.8" height="11.4" viewBox="0 0 10 13"><path d="M1.2 1.6H3.4Q3.6 0.2 5 0.2Q6.4 0.2 6.6 1.6H8.8Q9.8 1.6 9.8 2.6V11.8Q9.8 12.8 8.8 12.8H1.2Q0.2 12.8 0.2 11.8V2.6Q0.2 1.6 1.2 1.6Z" fill="#fff"/><path d="M2.4 6.1H3.6M4.6 6.1H7.8M2.4 8.3H3.6M4.6 8.3H7.8M2.4 10.5H3.6M4.6 10.5H7.8" stroke="#1b98a1" stroke-width="1.1"/><circle cx="5" cy="1.9" r="0.7" fill="#1b98a1"/></svg>
<span class="t" style="left:405.70px;top:173.10px;font-size:10.4px;color:#fff;-webkit-text-stroke:0.45px #fff;transform:scaleX(1.0554);">Cdes non Sol. : Commandes non soldées</span>
<svg class="r" style="left:1808px;top:150px;" width="13.4" height="11.6" viewBox="0 0 13.4 11.6"><path d="M1 0.8L6 5.8L1 10.8M7 0.8L12 5.8L7 10.8" fill="none" stroke="#4d5562" stroke-width="1.2"/></svg>
<svg class="r" style="left:1786px;top:174.4px;" width="17.6" height="8.4" viewBox="0 0 17.6 8.4"><path d="M0.4 4.2H12.6M9.6 1.2L12.8 4.2L9.6 7.2M16.4 0.6V7.8" fill="none" stroke="#fff" stroke-width="1.2"/></svg>
<svg class="r" style="left:1811px;top:172.6px;" width="10" height="11" viewBox="0 0 10 11"><path d="M5 0.4V7.4M1.8 4.4L5 7.6L8.2 4.4M0.6 10.2H9.4" fill="none" stroke="#fff" stroke-width="1.2"/></svg>
<div class="r" style="left:372px;top:185.6px;width:1456px;height:817.4px;background:#f0f0f0;"></div>
<div class="r" style="left:1026px;top:185.6px;width:802px;height:23px;background:linear-gradient(#f1f1f2,#f9f9fa);"></div>
<div class="r" style="left:373.3px;top:187.2px;width:648px;height:785.4px;background:#fffffd;box-sizing:border-box;border:1px solid #6a6a6a;"></div>
<div class="r" style="left:404.8px;top:188.2px;width:615.5px;height:16.4px;background:linear-gradient(#fdfdfe,#f4f6fa 45%,#dfe5ee);"></div>
<div class="r" style="left:496.6px;top:188.2px;width:198.6px;height:16.4px;background:linear-gradient(#f8d7a3,#f9cc86);border-top:1px dotted #f0a73c;border-bottom:1px solid #f2a93f;box-sizing:border-box;"></div>
<div class="r" style="left:404.8px;top:203.8px;width:91.8px;height:0.9px;background:#9db9dc;"></div>
<div class="r" style="left:695.2px;top:203.8px;width:325.1px;height:0.9px;background:#9db9dc;"></div>
<div class="r" style="left:374.3px;top:188.2px;width:30.5px;height:16.4px;background:#afc4e3;background-image:radial-gradient(circle,#cddcf0 0.6px,transparent 0.9px);background-size:3px 3px;"></div>
<svg class="r" style="left:392px;top:192.6px;" width="9" height="9" viewBox="0 0 9 9"><path d="M8.6 0.4V8.6H0.4Z" fill="#dce6f3"/></svg>
<div class="r" style="left:374.3px;top:204.6px;width:30.5px;height:458.325px;background:#e4ebf5;"></div>
<span class="t" style="left:421.60px;top:190.72px;font-size:11.2px;color:#111;transform:scaleX(0.9238);">Date Recep.</span>
<span class="t" style="left:578.50px;top:190.72px;font-size:11.2px;color:#111;transform:scaleX(0.8839);">Numéro</span>
<span class="t" style="left:717.40px;top:190.72px;font-size:11.2px;color:#111;transform:scaleX(0.8773);">Gestionnaire</span>
<span class="t" style="left:812.30px;top:190.72px;font-size:11.2px;color:#111;transform:scaleX(0.8775);">Ges. Figé</span>
<span class="t" style="left:889.00px;top:190.72px;font-size:11.2px;color:#111;transform:scaleX(0.8639);">Commercial</span>
<span class="t" style="left:988.30px;top:190.72px;font-size:11.2px;color:#111;transform:scaleX(0.9227);">Type</span>
<div class="r" style="left:374.3px;top:225.875px;width:30.5px;height:1px;background:#9bbae3;"></div>
<span class="t" style="left:423.90px;top:211.17px;font-size:11.2px;color:#111;transform:scaleX(0.9815);">08/01/2024</span>
<span class="t" style="left:499.70px;top:211.17px;font-size:11.2px;color:#111;transform:scaleX(0.8967);">C240100001</span>
<span class="t" style="left:698.30px;top:211.17px;font-size:11.2px;color:#111;transform:scaleX(0.9025);">Gen</span>
<span class="t" style="left:874.70px;top:211.17px;font-size:11.2px;color:#111;transform:scaleX(0.9009);">NORD</span>
<span class="t" style="left:960.10px;top:211.17px;font-size:11.2px;color:#111;transform:scaleX(0.7420);">C</span>
<div class="r" style="left:827.3px;top:209.65px;width:12.2px;height:11.5px;background:#fff;box-sizing:border-box;border:1px solid #4a4a4a;"></div>
<div class="r" style="left:404.8px;top:226.975px;width:615.5px;height:21.025px;background:#efefef;"></div>
<div class="r" style="left:374.3px;top:247.7px;width:30.5px;height:1px;background:#9bbae3;"></div>
<span class="t" style="left:423.90px;top:232.99px;font-size:11.2px;color:#111;transform:scaleX(0.9815);">15/01/2024</span>
<span class="t" style="left:499.70px;top:232.99px;font-size:11.2px;color:#111;transform:scaleX(0.8967);">C240100002</span>
<span class="t" style="left:698.30px;top:232.99px;font-size:11.2px;color:#111;transform:scaleX(0.9025);">Gen</span>
<span class="t" style="left:874.70px;top:232.99px;font-size:11.2px;color:#111;transform:scaleX(0.9009);">NORD</span>
<span class="t" style="left:960.10px;top:232.99px;font-size:11.2px;color:#111;transform:scaleX(0.7420);">C</span>
<div class="r" style="left:827.3px;top:231.475px;width:12.2px;height:11.5px;background:#fff;box-sizing:border-box;border:1px solid #4a4a4a;"></div>
<div class="r" style="left:374.3px;top:269.525px;width:30.5px;height:1px;background:#9bbae3;"></div>
<span class="t" style="left:423.90px;top:254.82px;font-size:11.2px;color:#111;transform:scaleX(0.9815);">23/01/2024</span>
<span class="t" style="left:499.70px;top:254.82px;font-size:11.2px;color:#111;transform:scaleX(0.8967);">C240100003</span>
<span class="t" style="left:698.30px;top:254.82px;font-size:11.2px;color:#111;transform:scaleX(0.9025);">Gen</span>
<span class="t" style="left:874.70px;top:254.82px;font-size:11.2px;color:#111;transform:scaleX(0.8968);">SUD</span>
<span class="t" style="left:960.10px;top:254.82px;font-size:11.2px;color:#111;transform:scaleX(0.7420);">C</span>
<div class="r" style="left:827.3px;top:253.3px;width:12.2px;height:11.5px;background:#fff;box-sizing:border-box;border:1px solid #4a4a4a;"></div>
<div class="r" style="left:404.8px;top:270.625px;width:615.5px;height:21.025px;background:#efefef;"></div>
<div class="r" style="left:374.3px;top:291.35px;width:30.5px;height:1px;background:#9bbae3;"></div>
<span class="t" style="left:423.90px;top:276.64px;font-size:11.2px;color:#111;transform:scaleX(0.9815);">23/01/2024</span>
<span class="t" style="left:499.70px;top:276.64px;font-size:11.2px;color:#111;transform:scaleX(0.8967);">C240100004</span>
<span class="t" style="left:698.30px;top:276.64px;font-size:11.2px;color:#111;transform:scaleX(0.9025);">Gen</span>
<span class="t" style="left:874.70px;top:276.64px;font-size:11.2px;color:#111;transform:scaleX(0.9042);">ADUPONT</span>
<span class="t" style="left:960.10px;top:276.64px;font-size:11.2px;color:#111;transform:scaleX(0.7420);">C</span>
<div class="r" style="left:827.3px;top:275.125px;width:12.2px;height:11.5px;background:#fff;box-sizing:border-box;border:1px solid #4a4a4a;"></div>
<div class="r" style="left:374.3px;top:313.175px;width:30.5px;height:1px;background:#9bbae3;"></div>
<span class="t" style="left:423.90px;top:298.47px;font-size:11.2px;color:#111;transform:scaleX(0.9815);">25/01/2024</span>
<span class="t" style="left:499.70px;top:298.47px;font-size:11.2px;color:#111;transform:scaleX(0.8967);">C240100005</span>
<span class="t" style="left:698.30px;top:298.47px;font-size:11.2px;color:#111;transform:scaleX(0.9025);">Gen</span>
<span class="t" style="left:874.70px;top:298.47px;font-size:11.2px;color:#111;transform:scaleX(0.9042);">ADUPONT</span>
<span class="t" style="left:960.10px;top:298.47px;font-size:11.2px;color:#111;transform:scaleX(0.7420);">C</span>
<div class="r" style="left:827.3px;top:296.95px;width:12.2px;height:11.5px;background:#fff;box-sizing:border-box;border:1px solid #4a4a4a;"></div>
<div class="r" style="left:404.8px;top:314.275px;width:615.5px;height:21.025px;background:#ffc90d;"></div>
<div class="r" style="left:374.3px;top:335px;width:30.5px;height:1px;background:#9bbae3;"></div>
<span class="t" style="left:417.90px;top:320.29px;font-size:11.2px;color:#000;font-weight:bold;transform:scaleX(1.1456);">07/02/2024</span>
<span class="t" style="left:499.70px;top:320.29px;font-size:11.2px;color:#000;font-weight:bold;transform:scaleX(1.0339);">C240200001</span>
<span class="t" style="left:698.30px;top:320.29px;font-size:11.2px;color:#000;font-weight:bold;">Gen</span>
<span class="t" style="left:874.70px;top:320.29px;font-size:11.2px;color:#000;font-weight:bold;transform:scaleX(1.0237);">SUD</span>
<span class="t" style="left:960.00px;top:320.29px;font-size:11.2px;color:#000;font-weight:bold;transform:scaleX(0.8657);">C</span>
<div class="r" style="left:827.3px;top:318.775px;width:12.2px;height:11.5px;background:#fff;box-sizing:border-box;border:1px solid #4a4a4a;"></div>
<div class="r" style="left:374.3px;top:356.825px;width:30.5px;height:1px;background:#9bbae3;"></div>
<span class="t" style="left:423.90px;top:342.12px;font-size:11.2px;color:#111;transform:scaleX(0.9815);">07/02/2024</span>
<span class="t" style="left:499.70px;top:342.12px;font-size:11.2px;color:#111;transform:scaleX(0.8967);">C240200002</span>
<span class="t" style="left:698.30px;top:342.12px;font-size:11.2px;color:#111;transform:scaleX(0.9025);">Gen</span>
<span class="t" style="left:874.70px;top:342.12px;font-size:11.2px;color:#111;transform:scaleX(0.9009);">NORD</span>
<span class="t" style="left:960.10px;top:342.12px;font-size:11.2px;color:#111;transform:scaleX(0.7420);">C</span>
<div class="r" style="left:827.3px;top:340.6px;width:12.2px;height:11.5px;background:#fff;box-sizing:border-box;border:1px solid #4a4a4a;"></div>
<div class="r" style="left:404.8px;top:357.925px;width:615.5px;height:21.025px;background:#efefef;"></div>
<div class="r" style="left:374.3px;top:378.65px;width:30.5px;height:1px;background:#9bbae3;"></div>
<span class="t" style="left:423.90px;top:363.94px;font-size:11.2px;color:#111;transform:scaleX(0.9815);">07/02/2024</span>
<span class="t" style="left:499.70px;top:363.94px;font-size:11.2px;color:#111;transform:scaleX(0.8967);">C240200003</span>
<span class="t" style="left:698.30px;top:363.94px;font-size:11.2px;color:#111;transform:scaleX(0.9025);">Gen</span>
<span class="t" style="left:874.70px;top:363.94px;font-size:11.2px;color:#111;transform:scaleX(0.9009);">NORD</span>
<span class="t" style="left:960.10px;top:363.94px;font-size:11.2px;color:#111;transform:scaleX(0.7420);">C</span>
<div class="r" style="left:827.3px;top:362.425px;width:12.2px;height:11.5px;background:#fff;box-sizing:border-box;border:1px solid #4a4a4a;"></div>
<div class="r" style="left:374.3px;top:400.475px;width:30.5px;height:1px;background:#9bbae3;"></div>
<span class="t" style="left:423.90px;top:385.77px;font-size:11.2px;color:#111;transform:scaleX(0.9815);">07/02/2024</span>
<span class="t" style="left:499.70px;top:385.77px;font-size:11.2px;color:#111;transform:scaleX(0.8967);">C240200004</span>
<span class="t" style="left:698.30px;top:385.77px;font-size:11.2px;color:#111;transform:scaleX(0.9025);">Gen</span>
<span class="t" style="left:874.70px;top:385.77px;font-size:11.2px;color:#111;transform:scaleX(0.8968);">SUD</span>
<span class="t" style="left:960.10px;top:385.77px;font-size:11.2px;color:#111;transform:scaleX(0.7420);">C</span>
<div class="r" style="left:827.3px;top:384.25px;width:12.2px;height:11.5px;background:#fff;box-sizing:border-box;border:1px solid #4a4a4a;"></div>
<div class="r" style="left:404.8px;top:401.575px;width:615.5px;height:21.025px;background:#efefef;"></div>
<div class="r" style="left:374.3px;top:422.3px;width:30.5px;height:1px;background:#9bbae3;"></div>
<span class="t" style="left:423.90px;top:407.59px;font-size:11.2px;color:#111;transform:scaleX(0.9815);">08/02/2024</span>
<span class="t" style="left:499.70px;top:407.59px;font-size:11.2px;color:#111;transform:scaleX(0.8967);">C240200005</span>
<span class="t" style="left:698.30px;top:407.59px;font-size:11.2px;color:#111;transform:scaleX(0.9025);">Gen</span>
<span class="t" style="left:874.70px;top:407.59px;font-size:11.2px;color:#111;transform:scaleX(0.9009);">NORD</span>
<span class="t" style="left:960.10px;top:407.59px;font-size:11.2px;color:#111;transform:scaleX(0.7420);">C</span>
<div class="r" style="left:827.3px;top:406.075px;width:12.2px;height:11.5px;background:#fff;box-sizing:border-box;border:1px solid #4a4a4a;"></div>
<div class="r" style="left:374.3px;top:423.4px;width:30.5px;height:21.825px;background:#f9cf8f;"></div>
<div class="r" style="left:374.3px;top:444.125px;width:30.5px;height:1px;background:#9bbae3;"></div>
<span class="t" style="left:423.90px;top:429.42px;font-size:11.2px;color:#111;transform:scaleX(0.9815);">08/02/2024</span>
<span class="t" style="left:499.70px;top:429.42px;font-size:11.2px;color:#111;transform:scaleX(0.8967);">C240200007</span>
<span class="t" style="left:698.30px;top:429.42px;font-size:11.2px;color:#111;transform:scaleX(0.9025);">Gen</span>
<span class="t" style="left:874.70px;top:429.42px;font-size:11.2px;color:#111;transform:scaleX(0.8968);">SUD</span>
<span class="t" style="left:960.10px;top:429.42px;font-size:11.2px;color:#111;transform:scaleX(0.7420);">C</span>
<div class="r" style="left:827.3px;top:427.9px;width:12.2px;height:11.5px;background:#fff;box-sizing:border-box;border:1px solid #4a4a4a;"></div>
<div class="r" style="left:404.8px;top:445.225px;width:615.5px;height:21.025px;background:#efefef;"></div>
<div class="r" style="left:374.3px;top:465.95px;width:30.5px;height:1px;background:#9bbae3;"></div>
<span class="t" style="left:423.90px;top:451.24px;font-size:11.2px;color:#111;transform:scaleX(0.9815);">08/02/2024</span>
<span class="t" style="left:499.70px;top:451.24px;font-size:11.2px;color:#111;transform:scaleX(0.8967);">C240200008</span>
<span class="t" style="left:698.30px;top:451.24px;font-size:11.2px;color:#111;transform:scaleX(0.9025);">Gen</span>
<span class="t" style="left:874.70px;top:451.24px;font-size:11.2px;color:#111;transform:scaleX(0.8968);">SUD</span>
<span class="t" style="left:960.10px;top:451.24px;font-size:11.2px;color:#111;transform:scaleX(0.7420);">C</span>
<div class="r" style="left:827.3px;top:449.725px;width:12.2px;height:11.5px;background:#fff;box-sizing:border-box;border:1px solid #4a4a4a;"></div>
<div class="r" style="left:374.3px;top:487.775px;width:30.5px;height:1px;background:#9bbae3;"></div>
<span class="t" style="left:423.90px;top:473.07px;font-size:11.2px;color:#111;transform:scaleX(0.9815);">08/02/2024</span>
<span class="t" style="left:499.70px;top:473.07px;font-size:11.2px;color:#111;transform:scaleX(0.8967);">C240200009</span>
<span class="t" style="left:698.30px;top:473.07px;font-size:11.2px;color:#111;transform:scaleX(0.9025);">Gen</span>
<span class="t" style="left:874.70px;top:473.07px;font-size:11.2px;color:#111;transform:scaleX(0.8968);">SUD</span>
<span class="t" style="left:960.10px;top:473.07px;font-size:11.2px;color:#111;transform:scaleX(0.7420);">C</span>
<div class="r" style="left:827.3px;top:471.55px;width:12.2px;height:11.5px;background:#fff;box-sizing:border-box;border:1px solid #4a4a4a;"></div>
<div class="r" style="left:404.8px;top:488.875px;width:615.5px;height:21.025px;background:#efefef;"></div>
<div class="r" style="left:374.3px;top:509.6px;width:30.5px;height:1px;background:#9bbae3;"></div>
<span class="t" style="left:423.90px;top:494.89px;font-size:11.2px;color:#111;transform:scaleX(0.9815);">08/02/2024</span>
<span class="t" style="left:499.70px;top:494.89px;font-size:11.2px;color:#111;transform:scaleX(0.8967);">C240200010</span>
<span class="t" style="left:698.30px;top:494.89px;font-size:11.2px;color:#111;transform:scaleX(0.9025);">Gen</span>
<span class="t" style="left:874.70px;top:494.89px;font-size:11.2px;color:#111;transform:scaleX(0.9009);">NORD</span>
<span class="t" style="left:960.10px;top:494.89px;font-size:11.2px;color:#111;transform:scaleX(0.7420);">C</span>
<div class="r" style="left:827.3px;top:493.375px;width:12.2px;height:11.5px;background:#fff;box-sizing:border-box;border:1px solid #4a4a4a;"></div>
<div class="r" style="left:374.3px;top:531.425px;width:30.5px;height:1px;background:#9bbae3;"></div>
<span class="t" style="left:423.90px;top:516.72px;font-size:11.2px;color:#111;transform:scaleX(0.9815);">08/02/2024</span>
<span class="t" style="left:499.70px;top:516.72px;font-size:11.2px;color:#111;transform:scaleX(0.9085);">C240200011</span>
<span class="t" style="left:698.30px;top:516.72px;font-size:11.2px;color:#111;transform:scaleX(0.9025);">Gen</span>
<span class="t" style="left:874.70px;top:516.72px;font-size:11.2px;color:#111;transform:scaleX(0.8968);">SUD</span>
<span class="t" style="left:960.10px;top:516.72px;font-size:11.2px;color:#111;transform:scaleX(0.7420);">C</span>
<div class="r" style="left:827.3px;top:515.2px;width:12.2px;height:11.5px;background:#fff;box-sizing:border-box;border:1px solid #4a4a4a;"></div>
<div class="r" style="left:404.8px;top:532.525px;width:615.5px;height:21.025px;background:#efefef;"></div>
<div class="r" style="left:374.3px;top:553.25px;width:30.5px;height:1px;background:#9bbae3;"></div>
<span class="t" style="left:423.90px;top:538.54px;font-size:11.2px;color:#111;transform:scaleX(0.9815);">09/02/2024</span>
<span class="t" style="left:499.70px;top:538.54px;font-size:11.2px;color:#111;transform:scaleX(0.8967);">C240200012</span>
<span class="t" style="left:698.30px;top:538.54px;font-size:11.2px;color:#111;transform:scaleX(0.9025);">Gen</span>
<span class="t" style="left:874.70px;top:538.54px;font-size:11.2px;color:#111;transform:scaleX(0.8968);">SUD</span>
<span class="t" style="left:960.10px;top:538.54px;font-size:11.2px;color:#111;transform:scaleX(0.7420);">C</span>
<div class="r" style="left:827.3px;top:537.025px;width:12.2px;height:11.5px;background:#fff;box-sizing:border-box;border:1px solid #4a4a4a;"></div>
<div class="r" style="left:374.3px;top:575.075px;width:30.5px;height:1px;background:#9bbae3;"></div>
<span class="t" style="left:423.90px;top:560.37px;font-size:11.2px;color:#111;transform:scaleX(0.9815);">09/02/2024</span>
<span class="t" style="left:499.70px;top:560.37px;font-size:11.2px;color:#111;transform:scaleX(0.8967);">C240200013</span>
<span class="t" style="left:698.30px;top:560.37px;font-size:11.2px;color:#111;transform:scaleX(0.9025);">Gen</span>
<span class="t" style="left:874.70px;top:560.37px;font-size:11.2px;color:#111;transform:scaleX(0.8968);">SUD</span>
<span class="t" style="left:960.10px;top:560.37px;font-size:11.2px;color:#111;transform:scaleX(0.7420);">C</span>
<div class="r" style="left:827.3px;top:558.85px;width:12.2px;height:11.5px;background:#fff;box-sizing:border-box;border:1px solid #4a4a4a;"></div>
<div class="r" style="left:404.8px;top:576.175px;width:615.5px;height:21.025px;background:#efefef;"></div>
<div class="r" style="left:374.3px;top:596.9px;width:30.5px;height:1px;background:#9bbae3;"></div>
<span class="t" style="left:423.90px;top:582.19px;font-size:11.2px;color:#111;transform:scaleX(0.9815);">09/02/2024</span>
<span class="t" style="left:499.70px;top:582.19px;font-size:11.2px;color:#111;transform:scaleX(0.8967);">C240200014</span>
<span class="t" style="left:698.30px;top:582.19px;font-size:11.2px;color:#111;transform:scaleX(0.9025);">Gen</span>
<span class="t" style="left:874.70px;top:582.19px;font-size:11.2px;color:#111;transform:scaleX(0.8968);">SUD</span>
<span class="t" style="left:960.10px;top:582.19px;font-size:11.2px;color:#111;transform:scaleX(0.7420);">C</span>
<div class="r" style="left:827.3px;top:580.675px;width:12.2px;height:11.5px;background:#fff;box-sizing:border-box;border:1px solid #4a4a4a;"></div>
<div class="r" style="left:374.3px;top:618.725px;width:30.5px;height:1px;background:#9bbae3;"></div>
<span class="t" style="left:423.90px;top:604.02px;font-size:11.2px;color:#111;transform:scaleX(0.9815);">09/02/2024</span>
<span class="t" style="left:499.70px;top:604.02px;font-size:11.2px;color:#111;transform:scaleX(0.8967);">C240200015</span>
<span class="t" style="left:698.30px;top:604.02px;font-size:11.2px;color:#111;transform:scaleX(0.9025);">Gen</span>
<span class="t" style="left:874.70px;top:604.02px;font-size:11.2px;color:#111;transform:scaleX(0.8968);">SUD</span>
<span class="t" style="left:960.10px;top:604.02px;font-size:11.2px;color:#111;transform:scaleX(0.7420);">C</span>
<div class="r" style="left:827.3px;top:602.5px;width:12.2px;height:11.5px;background:#fff;box-sizing:border-box;border:1px solid #4a4a4a;"></div>
<div class="r" style="left:404.8px;top:619.825px;width:615.5px;height:21.025px;background:#efefef;"></div>
<div class="r" style="left:374.3px;top:640.55px;width:30.5px;height:1px;background:#9bbae3;"></div>
<span class="t" style="left:423.90px;top:625.84px;font-size:11.2px;color:#111;transform:scaleX(0.9815);">14/02/2024</span>
<span class="t" style="left:499.70px;top:625.84px;font-size:11.2px;color:#111;transform:scaleX(0.8967);">C240200016</span>
<span class="t" style="left:698.30px;top:625.84px;font-size:11.2px;color:#111;transform:scaleX(0.9025);">Gen</span>
<span class="t" style="left:874.70px;top:625.84px;font-size:11.2px;color:#111;transform:scaleX(0.9042);">ADUPONT</span>
<span class="t" style="left:960.10px;top:625.84px;font-size:11.2px;color:#111;transform:scaleX(0.7420);">C</span>
<div class="r" style="left:827.3px;top:624.325px;width:12.2px;height:11.5px;background:#fff;box-sizing:border-box;border:1px solid #4a4a4a;"></div>
<div class="r" style="left:374.3px;top:662.375px;width:30.5px;height:1px;background:#9bbae3;"></div>
<span class="t" style="left:423.90px;top:647.67px;font-size:11.2px;color:#111;transform:scaleX(0.9815);">21/03/2024</span>
<span class="t" style="left:499.70px;top:647.67px;font-size:11.2px;color:#111;transform:scaleX(0.8967);">C240300001</span>
<span class="t" style="left:698.30px;top:647.67px;font-size:11.2px;color:#111;transform:scaleX(0.9025);">Gen</span>
<span class="t" style="left:874.70px;top:647.67px;font-size:11.2px;color:#111;transform:scaleX(0.8968);">SUD</span>
<span class="t" style="left:960.10px;top:647.67px;font-size:11.2px;color:#111;transform:scaleX(0.7420);">C</span>
<div class="r" style="left:827.3px;top:646.15px;width:12.2px;height:11.5px;background:#fff;box-sizing:border-box;border:1px solid #4a4a4a;"></div>
<div class="r" style="left:404.4px;top:188.2px;width:0px;height:474.725px;background:transparent;border-left:1px dotted #c6d3e4;"></div>
<div class="r" style="left:496.2px;top:188.2px;width:0px;height:474.725px;background:transparent;border-left:1px dotted #c6d3e4;"></div>
<div class="r" style="left:694.8px;top:188.2px;width:0px;height:474.725px;background:transparent;border-left:1px dotted #c6d3e4;"></div>
<div class="r" style="left:794.8px;top:188.2px;width:0px;height:474.725px;background:transparent;border-left:1px dotted #c6d3e4;"></div>
<div class="r" style="left:871.8px;top:188.2px;width:0px;height:474.725px;background:transparent;border-left:1px dotted #c6d3e4;"></div>
<div class="r" style="left:956px;top:188.2px;width:0px;height:474.725px;background:transparent;border-left:1px dotted #c6d3e4;"></div>
<div class="r" style="left:404.3px;top:204.6px;width:1px;height:458.325px;background:#a9c3e6;"></div>
<div class="r" style="left:404.3px;top:189.2px;width:1px;height:15.4px;background:#b9cbe6;"></div>
<div class="r" style="left:496.1px;top:189.2px;width:1px;height:15.4px;background:#b9cbe6;"></div>
<div class="r" style="left:694.7px;top:189.2px;width:1px;height:15.4px;background:#b9cbe6;"></div>
<div class="r" style="left:794.7px;top:189.2px;width:1px;height:15.4px;background:#b9cbe6;"></div>
<div class="r" style="left:871.7px;top:189.2px;width:1px;height:15.4px;background:#b9cbe6;"></div>
<div class="r" style="left:955.9px;top:189.2px;width:1px;height:15.4px;background:#b9cbe6;"></div>
<div class="r" style="left:374.3px;top:662.875px;width:646px;height:1px;background:#9a9a9a;"></div>
<div class="r" style="left:495.7px;top:422.5px;width:200.7px;height:23.325px;background:transparent;box-sizing:border-box;border:2px solid #000;"></div>
<div class="r" style="left:374.3px;top:956.6px;width:646px;height:15.2px;background:#7499c5;"></div>
<div class="r" style="left:374.6px;top:957px;width:13.8px;height:14.4px;background:#dde6f3;border:1px solid #8aa7cf;box-sizing:border-box;"></div>
<svg class="r" style="left:378.6px;top:960.4px;" width="5" height="8" viewBox="0 0 5 8"><path d="M4.8 0.2V7.8L0.4 4Z" fill="#111"/></svg>
<div class="r" style="left:388.6px;top:957px;width:28.2px;height:14.4px;background:linear-gradient(#e8eef8,#cfdcee);border:1px solid #8aa7cf;box-sizing:border-box;"></div>
<div class="r" style="left:1006px;top:957px;width:13.8px;height:14.4px;background:#dde6f3;border:1px solid #8aa7cf;box-sizing:border-box;"></div>
<svg class="r" style="left:1010.8px;top:960.4px;" width="5" height="8" viewBox="0 0 5 8"><path d="M0.2 0.2V7.8L4.6 4Z" fill="#111"/></svg>
<div class="r" style="left:379px;top:978px;width:62.4px;height:19px;background:#e3e3e3;border:1px solid #adadad;box-sizing:border-box;"></div>
<svg class="r" style="left:388.2px;top:983.6px;" width="10" height="9" viewBox="0 0 10 9"><path d="M1 0.8L9 8.2M9 0.8L1 8.2" stroke="#e8501c" stroke-width="2.7"/></svg>
<span class="t" style="left:403.30px;top:981.52px;font-size:11.2px;color:#111;transform:scaleX(0.8508);">Fermer</span>
<div class="r" style="left:1022.4px;top:186px;width:3.2px;height:817px;background:linear-gradient(90deg,#b4b4b4,#6f6f6f 60%,#9a9a9a);"></div>
<div class="r" style="left:489.6px;top:206.4px;width:35px;height:35px;border-radius:50%;background:rgba(255,255,0,0.86);"></div>
<svg class="r" style="left:505.7px;top:225.4px;" width="27" height="38" viewBox="0 0 27 38"><path d="M1.5 1.8V30.4L8.2 24L13.2 35.6L18 33.4L13 22.2H23Z" fill="#fff" stroke="#000" stroke-width="2" stroke-linejoin="miter"/></svg>
<div class="r" style="left:1027.4px;top:207.9px;width:799.2px;height:763.9px;background:#f0f0f0;box-sizing:border-box;border:1px solid #a7a7a7;border-top-color:#828282;border-left-color:#d8d8d8;border-right-color:#bdbdbd;"></div>
<svg class="r" style="left:1026px;top:186px;" width="720" height="26" viewBox="1026 186 720 26"><path d="M1601.0 208.9L1601.0 190.4L1688.0 190.4C1694.0 190.4 1693.0 208.9 1699.0 208.9Z" fill="#f0f0f0" stroke="none"/><path d="M1601.0 190.4L1688.0 190.4C1694.0 190.4 1693.0 208.9 1699.0 208.9" fill="none" stroke="#8a8a8a" stroke-width="1"/><path d="M1516.0 208.9L1516.0 190.4L1601.0 190.4C1607.0 190.4 1606.0 208.9 1612.0 208.9Z" fill="#f0f0f0" stroke="none"/><path d="M1516.0 190.4L1601.0 190.4C1607.0 190.4 1606.0 208.9 1612.0 208.9" fill="none" stroke="#8a8a8a" stroke-width="1"/><path d="M1413.0 208.9L1413.0 190.4L1516.0 190.4C1522.0 190.4 1521.0 208.9 1527.0 208.9Z" fill="#f0f0f0" stroke="none"/><path d="M1413.0 190.4L1516.0 190.4C1522.0 190.4 1521.0 208.9 1527.0 208.9" fill="none" stroke="#8a8a8a" stroke-width="1"/><path d="M1349.0 208.9L1349.0 190.4L1412.8 190.4C1418.8 190.4 1417.8 208.9 1423.8 208.9Z" fill="#f0f0f0" stroke="none"/><path d="M1349.0 190.4L1412.8 190.4C1418.8 190.4 1417.8 208.9 1423.8 208.9" fill="none" stroke="#8a8a8a" stroke-width="1"/><path d="M1296.0 208.9L1296.0 190.4L1348.7 190.4C1354.7 190.4 1353.7 208.9 1359.7 208.9Z" fill="#f0f0f0" stroke="none"/><path d="M1296.0 190.4L1348.7 190.4C1354.7 190.4 1353.7 208.9 1359.7 208.9" fill="none" stroke="#8a8a8a" stroke-width="1"/><path d="M1254.0 208.9L1254.0 190.4L1295.7 190.4C1301.7 190.4 1300.7 208.9 1306.7 208.9Z" fill="#f0f0f0" stroke="none"/><path d="M1254.0 190.4L1295.7 190.4C1301.7 190.4 1300.7 208.9 1306.7 208.9" fill="none" stroke="#8a8a8a" stroke-width="1"/><path d="M1201.0 208.9L1201.0 190.4L1253.9 190.4C1259.9 190.4 1258.9 208.9 1264.9 208.9Z" fill="#f0f0f0" stroke="none"/><path d="M1201.0 190.4L1253.9 190.4C1259.9 190.4 1258.9 208.9 1264.9 208.9" fill="none" stroke="#8a8a8a" stroke-width="1"/><path d="M1119.0 208.9L1119.0 190.4L1200.9 190.4C1206.9 190.4 1205.9 208.9 1211.9 208.9Z" fill="#f0f0f0" stroke="none"/><path d="M1119.0 190.4L1200.9 190.4C1206.9 190.4 1205.9 208.9 1211.9 208.9" fill="none" stroke="#8a8a8a" stroke-width="1"/><path d="M1027.0 208.9C1033.0 208.9 1036.0 190.4 1043.0 190.4L1119.0 190.4C1124.0 190.4 1124.0 208.9 1129.0 208.9Z" fill="#f0f0f0" stroke="none"/><path d="M1027.0 208.9C1033.0 208.9 1036.0 190.4 1043.0 190.4L1119.0 190.4C1124.0 190.4 1124.0 208.9 1129.0 208.9" fill="none" stroke="#7a7a7a" stroke-width="1"/></svg>
<svg class="r" style="left:1043px;top:192px;" width="12" height="13" viewBox="0 0 12 13"><path d="M1 1.5H7.5L10.5 4.5V12.5H1Z" fill="#f3ede2" stroke="#d6cdbd" stroke-width="0.8"/><path d="M7 0.6L10.8 4.2H7Z" fill="#e3dccf"/></svg>
<svg class="r" style="left:1129.6px;top:192.4px;" width="14.4" height="12.4" viewBox="0 0 14.4 12.4"><rect x="0.4" y="2" width="11" height="9.6" rx="1" fill="#c9211e"/><rect x="1.6" y="3.4" width="8.6" height="2" fill="#7a1512"/><rect x="1.6" y="7" width="8.6" height="1.6" fill="#e9e9e9"/><rect x="11" y="1" width="3" height="8" fill="#7e8791"/></svg>
<svg class="r" style="left:1212.6px;top:192.6px;" width="11" height="12" viewBox="0 0 11 12"><path d="M1 3H8V11H1Z" fill="#ececec" stroke="#bdbdbd" stroke-width="0.7"/><path d="M3 9.6L9.8 0.8" stroke="#4c7b3b" stroke-width="1.6"/><path d="M2.4 10.4L3.6 8.6" stroke="#222" stroke-width="1.2"/></svg>
<svg class="r" style="left:1262px;top:193px;" width="14" height="10" viewBox="0 0 14 10"><path d="M0.6 8.8L3.4 3L6 5.2L8 1.2L10.4 5L13.4 8.8Z" fill="#e9e2bf" stroke="#b9b38e" stroke-width="0.7"/><path d="M0.6 8.8H13.4" stroke="#9ab56c" stroke-width="1"/></svg>
<svg class="r" style="left:1305.4px;top:192px;" width="13" height="13" viewBox="0 0 13 13"><path d="M6.4 0.6Q10 0.6 10.2 4.2L10.8 8L12.4 12.4H0.8L2.6 8.6Q2 0.8 6.4 0.6Z" fill="#2d3138"/><path d="M7 2Q9 2.4 9 5" stroke="#9aa3ad" stroke-width="1" fill="none"/></svg>
<svg class="r" style="left:1358.4px;top:192.6px;" width="12.6" height="12.6" viewBox="0 0 12.6 12.6"><circle cx="6.3" cy="6.3" r="5.8" fill="#c9932c" stroke="#9a6b14" stroke-width="0.9"/><circle cx="6.3" cy="6.3" r="2.4" fill="none" stroke="#f1cf7b" stroke-width="1.2"/></svg>
<svg class="r" style="left:1421px;top:192.4px;" width="15" height="13" viewBox="0 0 15 13"><circle cx="4.6" cy="3.4" r="2.4" fill="#e5a33b"/><path d="M0.6 11.6Q0.8 6.6 4.6 6.6Q8.4 6.6 8.6 11.6Z" fill="#6aa5d8"/><circle cx="10.2" cy="4.4" r="2" fill="#e9b56a"/><path d="M7 12Q7.4 7.6 10.2 7.4Q13.6 7.6 14 12Z" fill="#d96b5a"/></svg>
<svg class="r" style="left:1526px;top:193px;" width="12.4" height="11.6" viewBox="0 0 12.4 11.6"><path d="M0.8 11L2 8.2L10.2 0.8L11.8 2.2L3.6 9.8Z" fill="#1f1f1f"/></svg>
<svg class="r" style="left:1610px;top:193.6px;" width="13.6" height="9.6" viewBox="0 0 13.6 9.6"><rect x="0.5" y="0.8" width="12.6" height="7.6" rx="0.8" fill="#e2e2e2" stroke="#8f8f8f" stroke-width="0.8"/><rect x="2" y="2.4" width="6" height="2.6" fill="#8d8d8d"/><circle cx="10.4" cy="4" r="1.3" fill="#444"/></svg>
<span class="t" style="left:1059.80px;top:194.27px;font-size:11.5px;color:#111;font-weight:bold;transform:scaleX(0.9675);">Généralités</span>
<span class="t" style="left:1147.30px;top:193.82px;font-size:11.2px;color:#111;transform:scaleX(0.8736);">Destinataire</span>
<span class="t" style="left:1227.30px;top:193.82px;font-size:11.2px;color:#111;transform:scaleX(0.8856);">Devis</span>
<span class="t" style="left:1279.50px;top:193.82px;font-size:11.2px;color:#111;transform:scaleX(0.8036);">Prix</span>
<span class="t" style="left:1322.00px;top:193.82px;font-size:11.2px;color:#111;transform:scaleX(0.8749);">Statut</span>
<span class="t" style="left:1375.00px;top:193.82px;font-size:11.2px;color:#111;transform:scaleX(0.8946);">Blocage</span>
<span class="t" style="left:1439.00px;top:193.82px;font-size:11.2px;color:#111;transform:scaleX(0.8733);">Destinataire Final</span>
<span class="t" style="left:1541.70px;top:193.82px;font-size:11.2px;color:#111;transform:scaleX(0.8615);">Commentaire</span>
<span class="t" style="left:1626.50px;top:193.82px;font-size:11.2px;color:#111;transform:scaleX(0.9038);">Qui, Quand ?</span>
<span class="t" style="left:1070.40px;top:216.22px;font-size:11.2px;color:#111;transform:scaleX(0.9302);">Date Recep.</span>
<span class="t" style="left:1093.40px;top:234.25px;font-size:11.2px;color:#111;transform:scaleX(0.8764);">Numéro</span>
<span class="t" style="left:1072.00px;top:252.28px;font-size:11.2px;color:#111;transform:scaleX(0.8867);">Gestionnaire</span>
<span class="t" style="left:1085.40px;top:270.31px;font-size:11.2px;color:#111;transform:scaleX(0.8837);">Ges. Figé</span>
<span class="t" style="left:1077.00px;top:288.34px;font-size:11.2px;color:#111;transform:scaleX(0.8589);">Commercial</span>
<span class="t" style="left:1106.20px;top:306.37px;font-size:11.2px;color:#111;transform:scaleX(0.9103);">Type</span>
<span class="t" style="left:1064.70px;top:324.40px;font-size:11.2px;color:#111;transform:scaleX(0.8884);">Orig. Interne ?</span>
<span class="t" style="left:1064.70px;top:342.43px;font-size:11.2px;color:#111;transform:scaleX(0.9074);">Méthode Ges</span>
<span class="t" style="left:1071.30px;top:360.46px;font-size:11.2px;color:#111;transform:scaleX(0.9011);">Méthode Int.</span>
<span class="t" style="left:1069.50px;top:378.49px;font-size:11.2px;color:#111;transform:scaleX(0.8633);">Probleme Int.</span>
<span class="t" style="left:1061.00px;top:396.52px;font-size:11.2px;color:#111;transform:scaleX(0.8817);">Dos. Pro. Adm.</span>
<span class="t" style="left:1143.80px;top:216.47px;font-size:10.9px;color:#5a5a5a;font-family:'Liberation Mono',monospace;">08/02/2024</span>
<span class="t" style="left:1143.80px;top:234.25px;font-size:11.2px;color:#111;transform:scaleX(0.8967);">C240200007</span>
<span class="t" style="left:1143.80px;top:252.28px;font-size:11.2px;color:#111;transform:scaleX(0.9025);">Gen</span>
<span class="t" style="left:1143.80px;top:288.34px;font-size:11.2px;color:#111;transform:scaleX(0.8968);">SUD</span>
<span class="t" style="left:1143.80px;top:306.37px;font-size:11.2px;color:#111;transform:scaleX(0.7420);">C</span>
<span class="t" style="left:1143.80px;top:342.43px;font-size:11.2px;color:#111;transform:scaleX(0.8673);">0</span>
<span class="t" style="left:1143.80px;top:360.46px;font-size:11.2px;color:#111;transform:scaleX(0.8673);">0</span>
<span class="t" style="left:1143.40px;top:396.52px;font-size:11.2px;color:#111;transform:scaleX(0.9124);">VALIDEE</span>
<div class="r" style="left:1232.2px;top:214.8px;width:12.8px;height:12.4px;background:#fdfdfd;box-sizing:border-box;border:1px solid #b9b9b9;"></div>
<span class="t" style="left:1236.10px;top:216.20px;font-size:10.4px;color:#000;font-weight:bold;">?</span>
<div class="r" style="left:1232.2px;top:250.86px;width:12.8px;height:12.4px;background:#fdfdfd;box-sizing:border-box;border:1px solid #b9b9b9;"></div>
<span class="t" style="left:1236.10px;top:252.26px;font-size:10.4px;color:#000;font-weight:bold;">?</span>
<div class="r" style="left:1232.2px;top:286.92px;width:12.8px;height:12.4px;background:#fdfdfd;box-sizing:border-box;border:1px solid #b9b9b9;"></div>
<span class="t" style="left:1236.10px;top:288.32px;font-size:10.4px;color:#000;font-weight:bold;">?</span>
<div class="r" style="left:1232.2px;top:304.95px;width:12.8px;height:12.4px;background:#fdfdfd;box-sizing:border-box;border:1px solid #b9b9b9;"></div>
<span class="t" style="left:1236.10px;top:306.35px;font-size:10.4px;color:#000;font-weight:bold;">?</span>
<div class="r" style="left:1232.2px;top:377.07px;width:12.8px;height:12.4px;background:#fdfdfd;box-sizing:border-box;border:1px solid #b9b9b9;"></div>
<span class="t" style="left:1236.10px;top:378.47px;font-size:10.4px;color:#000;font-weight:bold;">?</span>
<div class="r" style="left:1232.2px;top:395.1px;width:12.8px;height:12.4px;background:#fdfdfd;box-sizing:border-box;border:1px solid #b9b9b9;"></div>
<span class="t" style="left:1236.10px;top:396.50px;font-size:10.4px;color:#000;font-weight:bold;">?</span>
<div class="r" style="left:1182.6px;top:341.01px;width:12.8px;height:12.4px;background:#fdfdfd;box-sizing:border-box;border:1px solid #b9b9b9;"></div>
<span class="t" style="left:1186.50px;top:342.41px;font-size:10.4px;color:#000;font-weight:bold;">?</span>
<div class="r" style="left:1182.6px;top:359.04px;width:12.8px;height:12.4px;background:#fdfdfd;box-sizing:border-box;border:1px solid #b9b9b9;"></div>
<span class="t" style="left:1186.50px;top:360.44px;font-size:10.4px;color:#000;font-weight:bold;">?</span>
<span class="t" style="left:1251.20px;top:252.28px;font-size:11.2px;color:#111;transform:scaleX(0.8912);">Gestionnaire défaut</span>
<span class="t" style="left:1251.20px;top:288.34px;font-size:11.2px;color:#111;transform:scaleX(0.8869);">FABRI</span>
<span class="t" style="left:1251.20px;top:306.37px;font-size:11.2px;color:#111;transform:scaleX(0.8639);">Commande</span>
<span class="t" style="left:1201.70px;top:342.43px;font-size:11.2px;color:#111;transform:scaleX(0.8865);">Cré.Ent. -&gt; Cré.Lig.; Sup.der.Lig. -&gt; Sup.Ent.</span>
<span class="t" style="left:1201.70px;top:360.46px;font-size:11.2px;color:#111;transform:scaleX(0.8968);">Intégration par Traitement</span>
<span class="t" style="left:1250.80px;top:396.52px;font-size:11.2px;color:#111;transform:scaleX(0.9201);">Validée</span>
<div class="r" style="left:1140.8px;top:269.89px;width:9.4px;height:9.4px;background:#fff;box-sizing:border-box;border:1px solid #c9c9c9;"></div>
<div class="r" style="left:1140.8px;top:323.98px;width:9.4px;height:9.4px;background:#f4f4f4;box-sizing:border-box;border:1px solid #d2d2d2;"></div>
<svg class="r" style="left:1142.4px;top:325.98px;" width="6.4" height="5.6" viewBox="0 0 6.4 5.6"><path d="M0.8 2.8L2.6 4.6L5.8 0.8" fill="none" stroke="#c4c4c4" stroke-width="1"/></svg>
<div class="r" style="left:1032px;top:978.6px;width:72px;height:18.2px;background:#d2d2d2;box-sizing:border-box;border:1px solid #c6c6c6;"></div>
<div class="r" style="left:1108px;top:978.6px;width:72px;height:18.2px;background:#d2d2d2;box-sizing:border-box;border:1px solid #c6c6c6;"></div>
<div class="r" style="left:1184px;top:978.6px;width:72px;height:18.2px;background:#d2d2d2;box-sizing:border-box;border:1px solid #c6c6c6;"></div>
<svg class="r" style="left:1046px;top:984px;" width="8.6" height="7" viewBox="0 0 8.6 7"><path d="M0.8 3.6L3.2 6L7.8 0.8" fill="none" stroke="#b5b5b5" stroke-width="1.5"/></svg>
<span class="t" style="left:1061.40px;top:981.72px;font-size:11.2px;color:#8a8a8a;transform:scaleX(0.9111);">Valider</span>
<span class="t" style="left:1117.20px;top:981.72px;font-size:11.2px;color:#8a8a8a;transform:scaleX(0.9174);">Sauvegarde</span>
<svg class="r" style="left:1196.4px;top:983.6px;" width="9.6" height="8.6" viewBox="0 0 9.6 8.6"><path d="M1 1L8.6 7.6M8.6 1L1 7.6" stroke="#adadad" stroke-width="2.2"/></svg>
<span class="t" style="left:1211.40px;top:981.72px;font-size:11.2px;color:#8a8a8a;transform:scaleX(0.9069);">Annuler</span>
<div class="r" style="left:1819px;top:1008px;width:1.8px;height:1.8px;background:#8aa4c4;"></div>
<div class="r" style="left:1815.5px;top:1011.5px;width:1.8px;height:1.8px;background:#8aa4c4;"></div>
<div class="r" style="left:1819px;top:1011.5px;width:1.8px;height:1.8px;background:#8aa4c4;"></div>
<div class="r" style="left:1812px;top:1015px;width:1.8px;height:1.8px;background:#8aa4c4;"></div>
<div class="r" style="left:1815.5px;top:1015px;width:1.8px;height:1.8px;background:#8aa4c4;"></div>
<div class="r" style="left:1819px;top:1015px;width:1.8px;height:1.8px;background:#8aa4c4;"></div>
</body></html>
